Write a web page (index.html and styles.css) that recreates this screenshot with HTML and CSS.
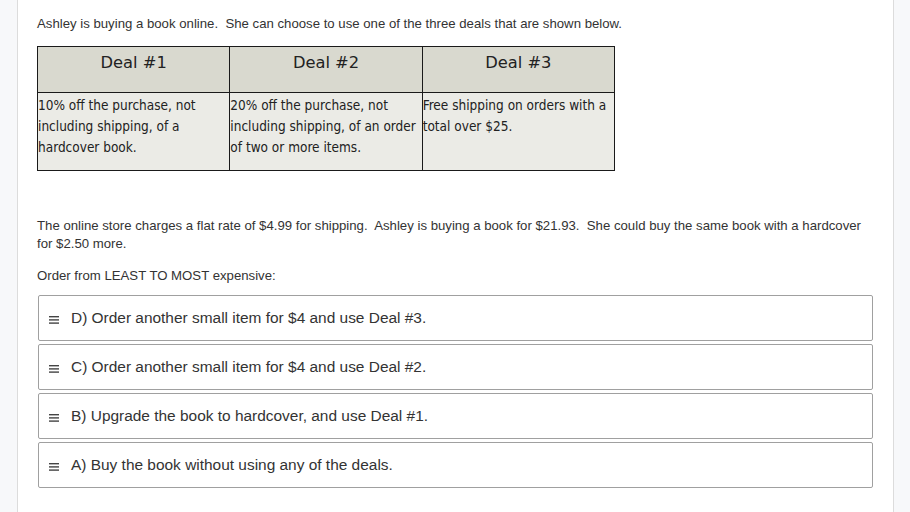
FILE: index.html
```html
<!DOCTYPE html>
<html>
<head>
<meta charset="utf-8">
<link rel="stylesheet" href="styles.css">
</head>
<body>
<div class="page">
  <aside class="side side-left"></aside>
  <main class="main">
    <p class="intro">Ashley is buying a book online.&nbsp; She can choose to use one of the three deals that are shown below.</p>
    <table class="deals">
      <thead>
        <tr><th>Deal #1</th><th>Deal #2</th><th>Deal #3</th></tr>
      </thead>
      <tbody>
        <tr>
          <td>10% off the purchase, not<br>including shipping, of a<br>hardcover book.</td>
          <td>20% off the purchase, not<br>including shipping, of an order<br>of two or more items.</td>
          <td>Free shipping on orders with a<br>total over $25.</td>
        </tr>
      </tbody>
    </table>
    <p class="story">The online store charges a flat rate of $4.99 for shipping.&nbsp; Ashley is buying a book for $21.93.&nbsp; She could buy the same book with a hardcover for $2.50 more.</p>
    <p class="prompt">Order from LEAST TO MOST expensive:</p>
    <ul class="sortable">
      <li class="item"><svg class="grip" width="10" height="8" viewBox="0 0 10 8"><rect x="0" y="0" width="10" height="1.4" fill="#444"/><rect x="0" y="3.2" width="10" height="1.4" fill="#444"/><rect x="0" y="6.4" width="10" height="1.4" fill="#444"/></svg><span>D) Order another small item for $4 and use Deal #3.</span></li>
      <li class="item"><svg class="grip" width="10" height="8" viewBox="0 0 10 8"><rect x="0" y="0" width="10" height="1.4" fill="#444"/><rect x="0" y="3.2" width="10" height="1.4" fill="#444"/><rect x="0" y="6.4" width="10" height="1.4" fill="#444"/></svg><span>C) Order another small item for $4 and use Deal #2.</span></li>
      <li class="item"><svg class="grip" width="10" height="8" viewBox="0 0 10 8"><rect x="0" y="0" width="10" height="1.4" fill="#444"/><rect x="0" y="3.2" width="10" height="1.4" fill="#444"/><rect x="0" y="6.4" width="10" height="1.4" fill="#444"/></svg><span>B) Upgrade the book to hardcover, and use Deal #1.</span></li>
      <li class="item"><svg class="grip" width="10" height="8" viewBox="0 0 10 8"><rect x="0" y="0" width="10" height="1.4" fill="#444"/><rect x="0" y="3.2" width="10" height="1.4" fill="#444"/><rect x="0" y="6.4" width="10" height="1.4" fill="#444"/></svg><span>A) Buy the book without using any of the deals.</span></li>
    </ul>
  </main>
  <aside class="side side-right"></aside>
</div>
</body>
</html>
```

FILE: styles.css
```css
html, body {
  margin: 0;
  padding: 0;
  background: #ffffff;
}
body {
  font-family: "Liberation Sans", Arial, sans-serif;
  color: #333333;
}
.page {
  display: flex;
  width: 910px;
  height: 512px;
  overflow: hidden;
}
.side {
  background: #f7f8fa;
}
.side-left {
  width: 17px;
  border-right: 1px solid #dcdcdc;
  flex: none;
}
.side-right {
  flex: 1;
}
.main {
  width: 856px;
  flex: none;
  padding: 15px 0 0 19px;
  border-right: 1px solid #dcdcdc;
  background: #fff;
}
.intro {
  margin: 0;
  font-size: 13.2px;
  line-height: 18px;
}
.deals {
  margin-top: 13px;
  border-collapse: collapse;
  width: 578px;
  table-layout: fixed;
  color: #222;
}
.deals th, .deals td {
  border: 1px solid #1a1a1a;
  vertical-align: top;
  padding: 0;
}
.deals th {
  background: #d9d9cf;
  height: 46px;
  font-family: "DejaVu Sans", sans-serif;
  font-weight: normal;
  font-size: 16.3px;
  line-height: 20px;
  padding-top: 6px;
  box-sizing: border-box;
  text-align: center;
}
.deals td {
  background: #ebebe6;
  height: 78px;
  box-sizing: border-box;
  font-family: "DejaVu Sans Condensed", "DejaVu Sans", sans-serif;
  font-size: 13.5px;
  line-height: 21px;
  padding-top: 2px;
  white-space: nowrap;
  overflow: hidden;
}
.story {
  margin: 46px 0 0;
  font-size: 13.2px;
  line-height: 18px;
  width: 830px;
}
.prompt {
  margin: 14px 0 0;
  font-size: 13.2px;
  line-height: 18px;
}
.sortable {
  list-style: none;
  margin: 10px 0 0 1px;
  padding: 0;
  width: 835px;
  display: flex;
  flex-direction: column;
  gap: 3px;
}
.item {
  height: 46px;
  box-sizing: border-box;
  border: 1px solid #a0a0a0;
  border-radius: 2px;
  display: flex;
  align-items: center;
  padding-left: 10px;
  font-size: 15.45px;
  color: #333;
}
.grip {
  margin-right: 12px;
  margin-top: 3px;
  flex: none;
}
```
